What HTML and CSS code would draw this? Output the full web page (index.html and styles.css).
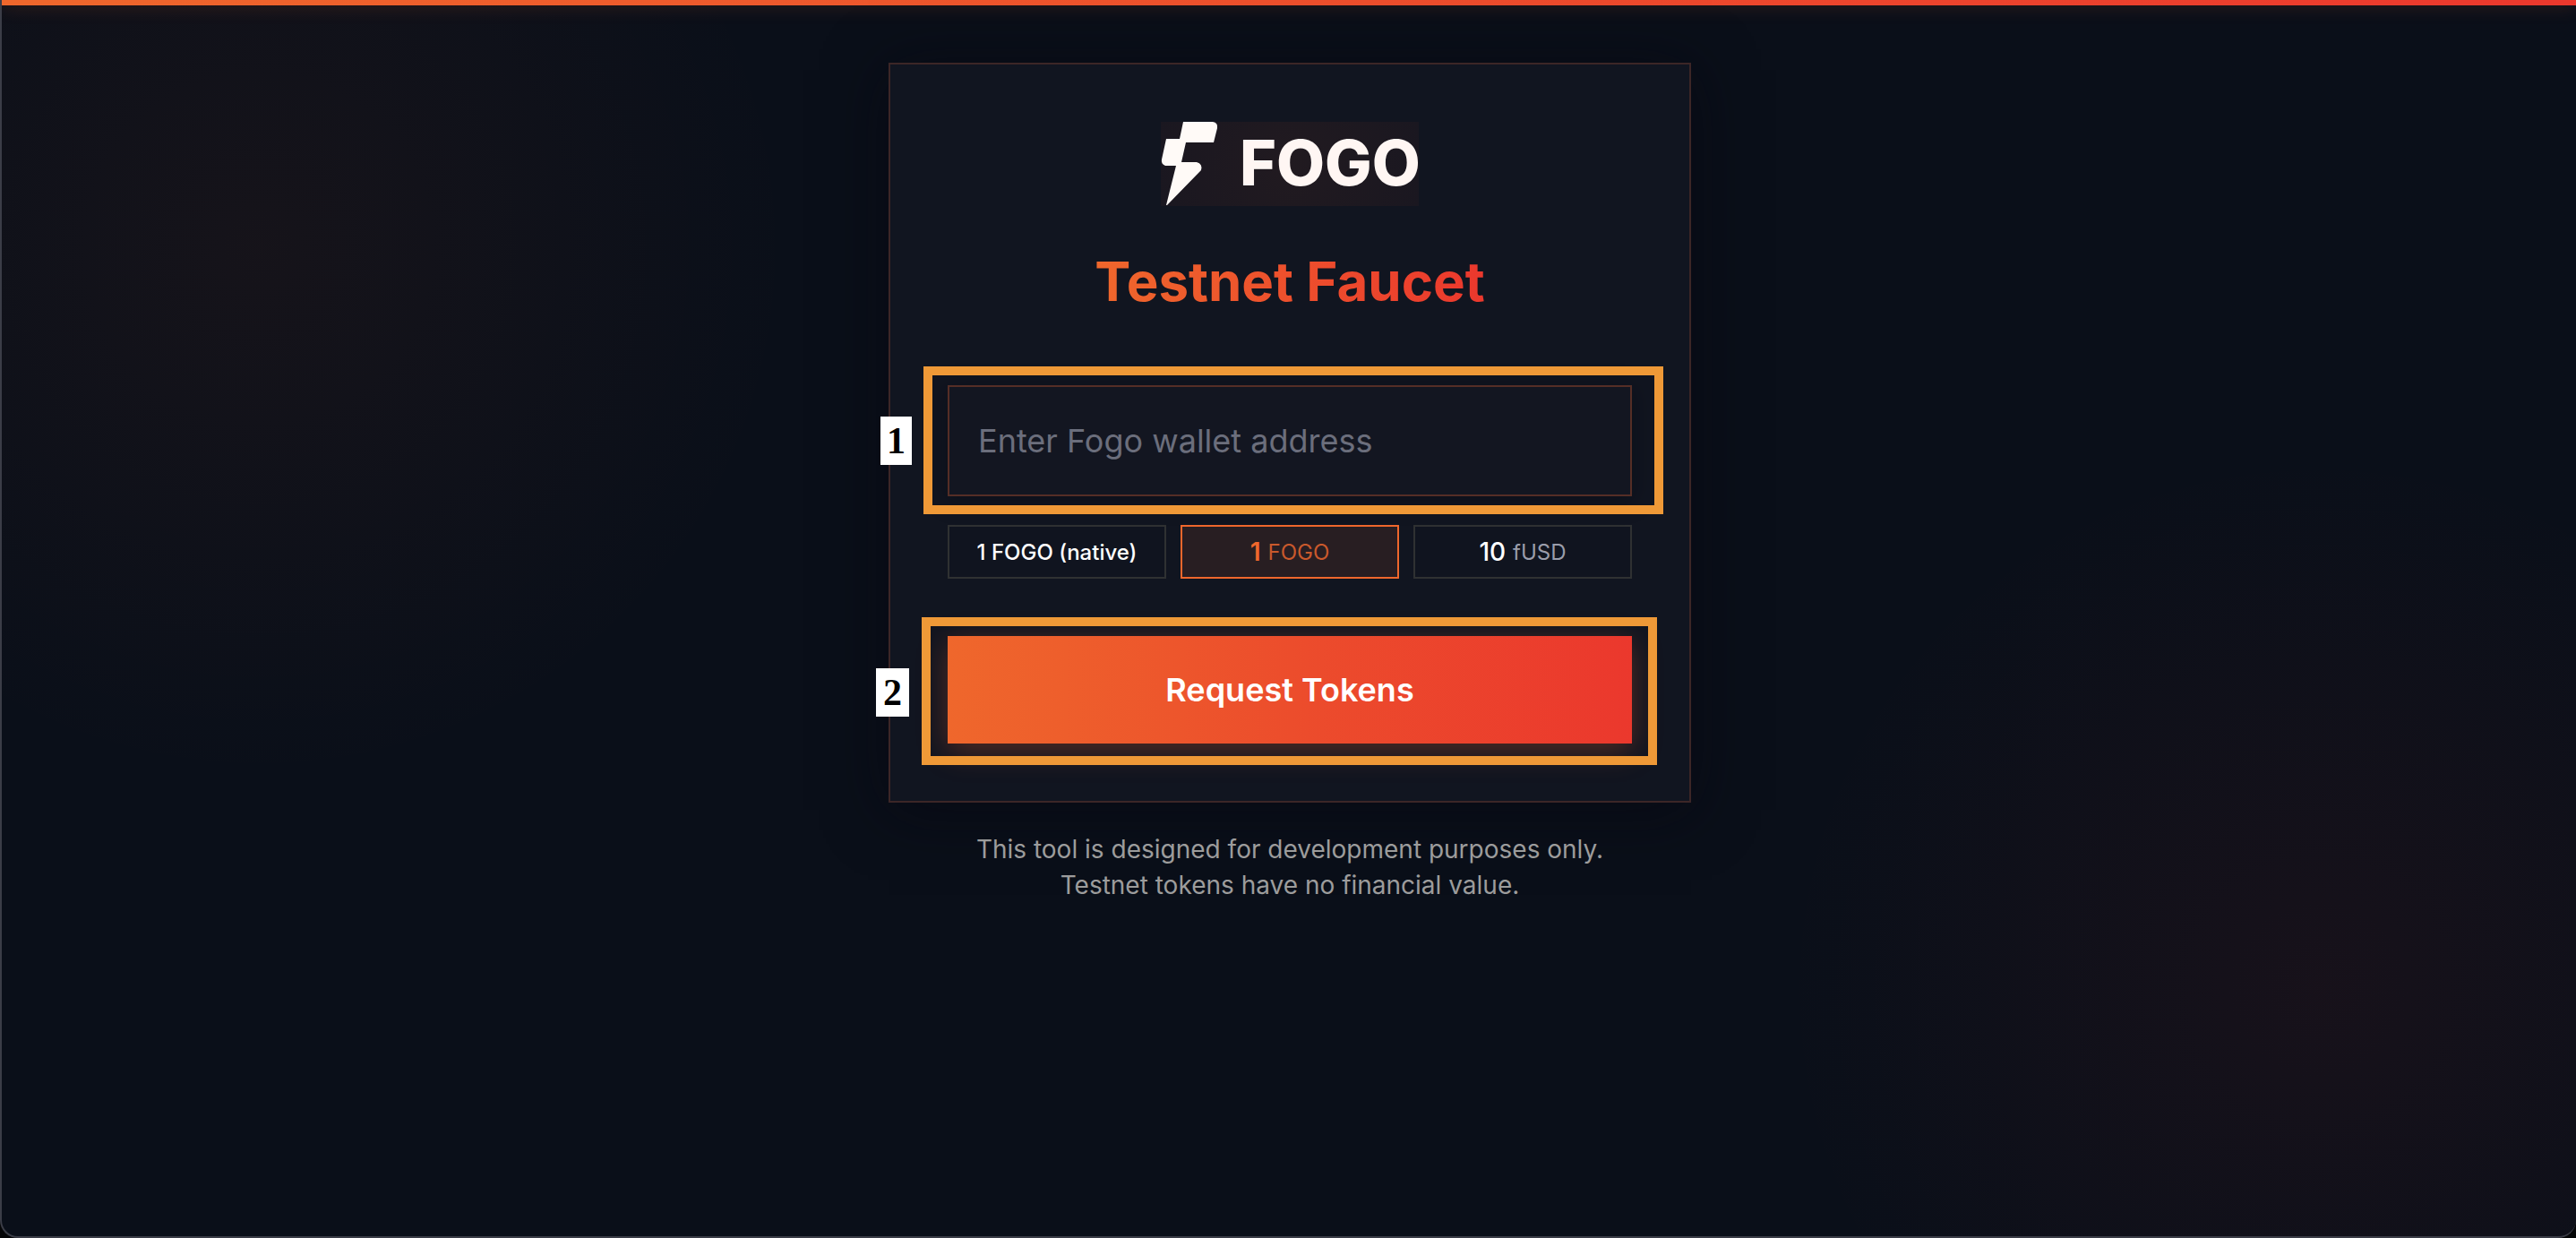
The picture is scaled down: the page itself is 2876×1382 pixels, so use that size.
FILE: index.html
```html
<!DOCTYPE html>
<html lang="en">
<head>
<meta charset="utf-8">
<meta name="viewport" content="width=device-width, initial-scale=1">
<title>Fogo Testnet Faucet</title>
<link rel="stylesheet" href="styles.css">
</head>
<body>
<div class="window">
  <div class="accent-bar"></div>
  <main class="page">
    <form class="card">
      <div class="logo">
        <svg class="logo-mark" viewBox="0 0 64 94" aria-hidden="true">
          <path fill="#fffaf7" d="M25 0H58Q64 1 63 7L59 23H28L23 45H40Q47 47 45 54L7 93H6L17 49H5Q0 47 1 42L6 19H21Z"/>
        </svg>
        <span class="logo-word">FOGO</span>
      </div>
      <h1 class="title">Testnet Faucet</h1>

      <div class="step step-address">
        <input class="address" type="text" placeholder="Enter Fogo wallet address" aria-label="Fogo wallet address">
        <span class="outline"></span>
        <span class="badge">1</span>
      </div>

      <div class="tokens">
        <button class="token" type="button">1 FOGO (native)</button>
        <button class="token token-active" type="button"><span class="amount">1</span><span class="unit">FOGO</span></button>
        <button class="token" type="button"><span class="amount">10</span><span class="unit">fUSD</span></button>
      </div>

      <div class="step step-request">
        <button class="request" type="button">Request Tokens</button>
        <span class="outline"></span>
        <span class="badge">2</span>
      </div>
    </form>
    <p class="note">This tool is designed for development purposes only.<br>Testnet tokens have no financial value.</p>
  </main>
</div>
</body>
</html>
```
FILE: styles.css
```css
* {
  box-sizing: border-box;
}

body {
  margin: 0;
  background: #050608;
  font-family: Inter, "Liberation Sans", sans-serif;
  color: #fff;
}

button,
input {
  font-family: inherit;
  margin: 0;
  border-radius: 0;
}

.window {
  min-height: 100vh;
  border: 2px solid #3b3d47;
  border-top: 0;
  border-right: 0;
  border-radius: 0 0 20px 20px;
  overflow: hidden;
  background:
    radial-gradient(circle at 10% 20%, rgba(242, 101, 43, 0.05) 0, transparent 600px),
    radial-gradient(circle at 90% 80%, rgba(235, 56, 46, 0.06) 0, transparent 600px),
    #0a0f19;
}

.accent-bar {
  height: 6px;
  background: linear-gradient(90deg, #ef672c, #eb382d);
  box-shadow: 0 0 20px rgba(242, 101, 43, 0.3);
}

.page {
  display: flex;
  flex-direction: column;
  align-items: center;
  gap: 32px;
  padding: 64px 0 64px 2px;
}

.card {
  width: 100%;
  max-width: 896px;
  padding: 64px;
  border: 2px solid #3c2627;
  background: #111520;
  box-shadow: 0 8px 64px rgba(6, 6, 16, 0.6);
}

.logo {
  display: flex;
  align-items: flex-start;
  gap: 24px;
  width: 288px;
  height: 94px;
  margin: 0 auto;
  background: radial-gradient(circle, #211a20, #1a1720);
}

.logo-mark {
  flex: none;
  width: 64px;
  height: 94px;
}

.logo-word {
  font-size: 70px;
  line-height: 92px;
  font-weight: 800;
  color: #fff6f3;
}

.title {
  width: fit-content;
  margin: 48px auto 80px;
  font-size: 60px;
  line-height: 72px;
  font-weight: 700;
  color: transparent;
  background: linear-gradient(90deg, #ef672c, #eb382d);
  background-clip: text;
}

.step {
  position: relative;
}

.address {
  display: block;
  width: 100%;
  height: 124px;
  padding: 0 32px;
  border: 2px solid #552e26;
  background: #131621;
  box-shadow: 0 4px 24px rgba(6, 8, 16, 0.4);
  font-size: 36px;
  color: #fff;
}

.address::placeholder {
  color: #6b6e7c;
  opacity: 1;
}

.tokens {
  display: grid;
  grid-template-columns: repeat(3, 1fr);
  gap: 16px;
  margin: 32px 0 64px;
}

.token {
  display: flex;
  align-items: center;
  justify-content: center;
  gap: 8px;
  height: 60px;
  padding: 0;
  border: 2px solid #2f3132;
  background: #10141f;
  font-size: 24px;
  font-weight: 500;
  color: #fff;
}

.amount {
  font-size: 28px;
}

.unit {
  font-weight: 400;
  color: #9a9dab;
}

.token-active {
  border-color: #ef672c;
  background: #281e22;
  color: #ef672c;
}

.token-active .amount {
  font-weight: 600;
}

.token-active .unit {
  color: #c9592c;
}

.request {
  display: block;
  width: 100%;
  height: 120px;
  padding: 0;
  border: 0;
  background: linear-gradient(90deg, #ef672c, #ec4d2c 50%, #eb382d);
  box-shadow: 0 8px 32px rgba(242, 101, 43, 0.3);
  font-size: 36px;
  font-weight: 600;
  color: #fff;
}

/* Numbered call-outs laid over the form */
.outline {
  position: absolute;
  border: 10px solid #ef9937;
  pointer-events: none;
}

.badge {
  position: absolute;
  padding: 0 7px;
  background: #fff;
  color: #000;
  font: 700 42px/54px "Liberation Serif", serif;
}

.step-address .outline {
  inset: -21px -35px -20px -27px;
}

.step-address .badge {
  top: 35px;
  left: -75px;
}

.step-request .outline {
  inset: -21px -28px -24px -29px;
}

.step-request .badge {
  top: 36px;
  left: -80px;
  padding: 0 8px;
}

.note {
  margin: 0;
  font-size: 28px;
  line-height: 40px;
  text-align: center;
  color: #9c9c9c;
}
```
